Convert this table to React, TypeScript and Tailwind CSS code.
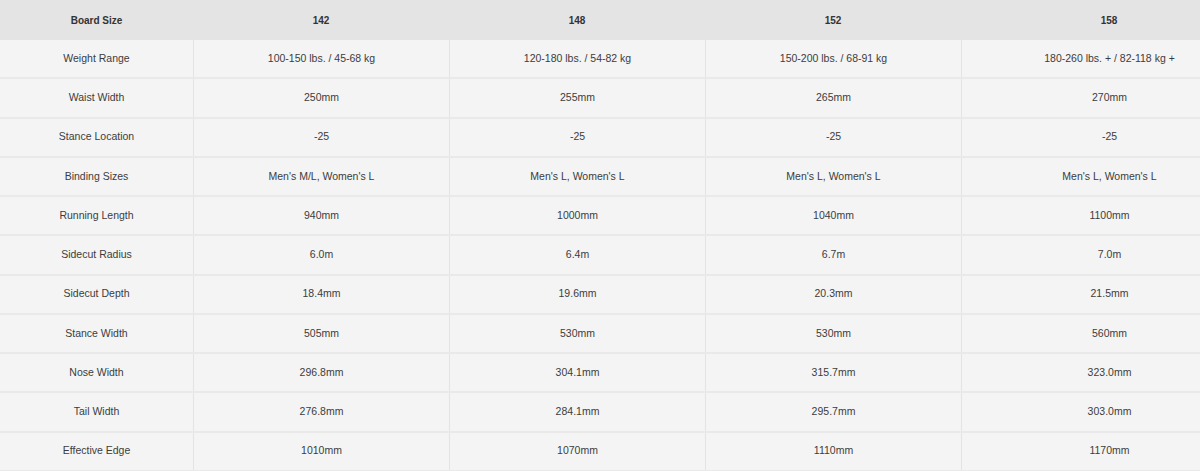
const sizes = ["142", "148", "152", "158"];

const rows: [string, string[]][] = [
  ["Weight Range", ["100-150 lbs. / 45-68 kg", "120-180 lbs. / 54-82 kg", "150-200 lbs. / 68-91 kg", "180-260 lbs. + / 82-118 kg +"]],
  ["Waist Width", ["250mm", "255mm", "265mm", "270mm"]],
  ["Stance Location", ["-25", "-25", "-25", "-25"]],
  ["Binding Sizes", ["Men's M/L, Women's L", "Men's L, Women's L", "Men's L, Women's L", "Men's L, Women's L"]],
  ["Running Length", ["940mm", "1000mm", "1040mm", "1100mm"]],
  ["Sidecut Radius", ["6.0m", "6.4m", "6.7m", "7.0m"]],
  ["Sidecut Depth", ["18.4mm", "19.6mm", "20.3mm", "21.5mm"]],
  ["Stance Width", ["505mm", "530mm", "530mm", "560mm"]],
  ["Nose Width", ["296.8mm", "304.1mm", "315.7mm", "323.0mm"]],
  ["Tail Width", ["276.8mm", "284.1mm", "295.7mm", "303.0mm"]],
  ["Effective Edge", ["1010mm", "1070mm", "1110mm", "1170mm"]],
];

export default function App() {
  return (
    <div className="w-[1200px] h-[471px] overflow-hidden bg-[#f4f4f4] font-['Liberation_Sans',Arial,sans-serif]">
      <div className="w-[1257px]">
        {/* header */}
        <div className="grid grid-cols-[193px_256px_256px_256px_296px] h-[40px] bg-[#e4e4e4] text-[10px] font-bold text-[#333]">
          <div className="flex items-center justify-center">Board Size</div>
          {sizes.map((s) => (
            <div key={s} className="flex items-center justify-center">
              {s}
            </div>
          ))}
        </div>

        {rows.map(([label, values]) => (
          <div
            key={label}
            className="grid grid-cols-[193px_256px_256px_256px_296px] h-[39.25px] border-b-2 border-[#e9e9e9] text-[10.5px] text-[#3c3c3c]"
          >
            <div className="flex items-center justify-center">{label}</div>
            {values.map((v, i) => (
              <div
                key={i}
                className="flex items-center justify-center border-l border-[#e3e3e3]"
              >
                {v}
              </div>
            ))}
          </div>
        ))}
      </div>
    </div>
  );
}
